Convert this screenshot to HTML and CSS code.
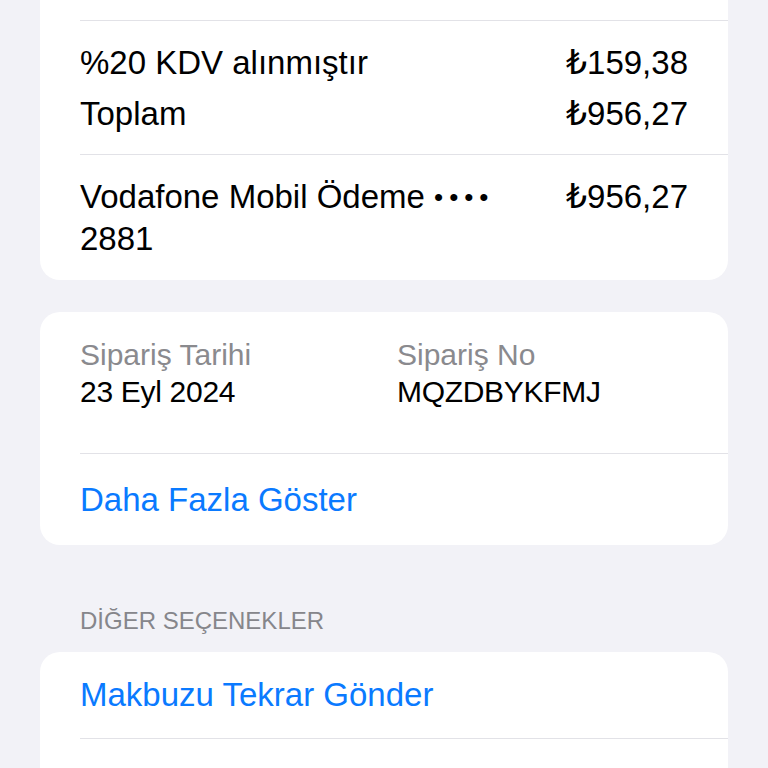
FILE: index.html
```html
<!DOCTYPE html>
<html lang="tr">
<head>
<meta charset="utf-8">
<link rel="stylesheet" href="styles.css">
</head>
<body>
<main class="screen">
  <section class="card card-top">
    <div class="group group-tax">
      <div class="line"><span>%20 KDV alınmıştır</span><span class="amount">₺159,38</span></div>
      <div class="line"><span>Toplam</span><span class="amount">₺956,27</span></div>
    </div>
    <div class="group group-pay">
      <div class="pay-row">
        <span class="pay-name">Vodafone Mobil Ödeme <span class="dots">••••</span> 2881</span>
        <span class="amount">₺956,27</span>
      </div>
    </div>
  </section>

  <section class="card">
    <div class="group group-order">
      <div class="meta">
        <div class="meta-label">Sipariş Tarihi</div>
        <div class="meta-value">23 Eyl 2024</div>
      </div>
      <div class="meta">
        <div class="meta-label">Sipariş No</div>
        <div class="meta-value">MQZDBYKFMJ</div>
      </div>
    </div>
    <div class="group link-row link-more">Daha Fazla Göster</div>
  </section>

  <h2 class="section-title">DİĞER SEÇENEKLER</h2>

  <section class="card">
    <div class="group link-row">Makbuzu Tekrar Gönder</div>
    <div class="group link-row">Sorun Bildir</div>
  </section>
</main>
</body>
</html>
```

FILE: styles.css
```css
html, body {
  margin: 0;
  padding: 0;
}
body {
  background: #f2f2f7;
  font-family: "Liberation Sans", Arial, "DejaVu Sans", sans-serif;
  color: #000;
  height: 768px;
  overflow: hidden;
}
.screen {
  display: flex;
  flex-direction: column;
  padding: 0 40px;
}
.card {
  background: #fff;
  border-radius: 20px;
  padding-left: 40px;
  display: flex;
  flex-direction: column;
}
.card-top {
  border-radius: 0 0 20px 20px;
  padding-top: 20px;
}
.card + .card {
  margin-top: 32px;
}
.group {
  padding-right: 40px;
  border-top: 1px solid #e2e2e7;
}
.card > .group:first-child {
  border-top: none;
}
.card-top > .group:first-child {
  border-top: 1px solid #e2e2e7;
}
.group-tax {
  padding-top: 16px;
  padding-bottom: 15px;
  font-size: 33px;
}
.line {
  display: flex;
  justify-content: space-between;
  line-height: 51px;
}
.group-pay {
  padding-top: 21px;
  padding-bottom: 20px;
  font-size: 33px;
  line-height: 42px;
}
.pay-row {
  display: flex;
  justify-content: space-between;
  gap: 60px;
}
.pay-name {
  flex: 1;
}
.dots {
  font-size: 26px;
  letter-spacing: 6px;
  vertical-align: 2px;
}
.amount {
  white-space: nowrap;
}
.group-order {
  display: grid;
  grid-template-columns: 317px 1fr;
  padding-top: 24px;
  padding-bottom: 43px;
  font-size: 30px;
  line-height: 37px;
}
.meta-value {
  letter-spacing: -0.3px;
}
.meta-label {
  color: #8a8a8e;
}
.link-row {
  color: #0a7aff;
  font-size: 33px;
  line-height: 43px;
  padding-top: 21px;
  padding-bottom: 22px;
}
.link-more {
  padding-top: 24px;
  padding-bottom: 24px;
}
.section-title {
  margin: 61px 0 16px 40px;
  font-size: 24px;
  line-height: 30px;
  font-weight: normal;
  color: #86868b;
}
```
